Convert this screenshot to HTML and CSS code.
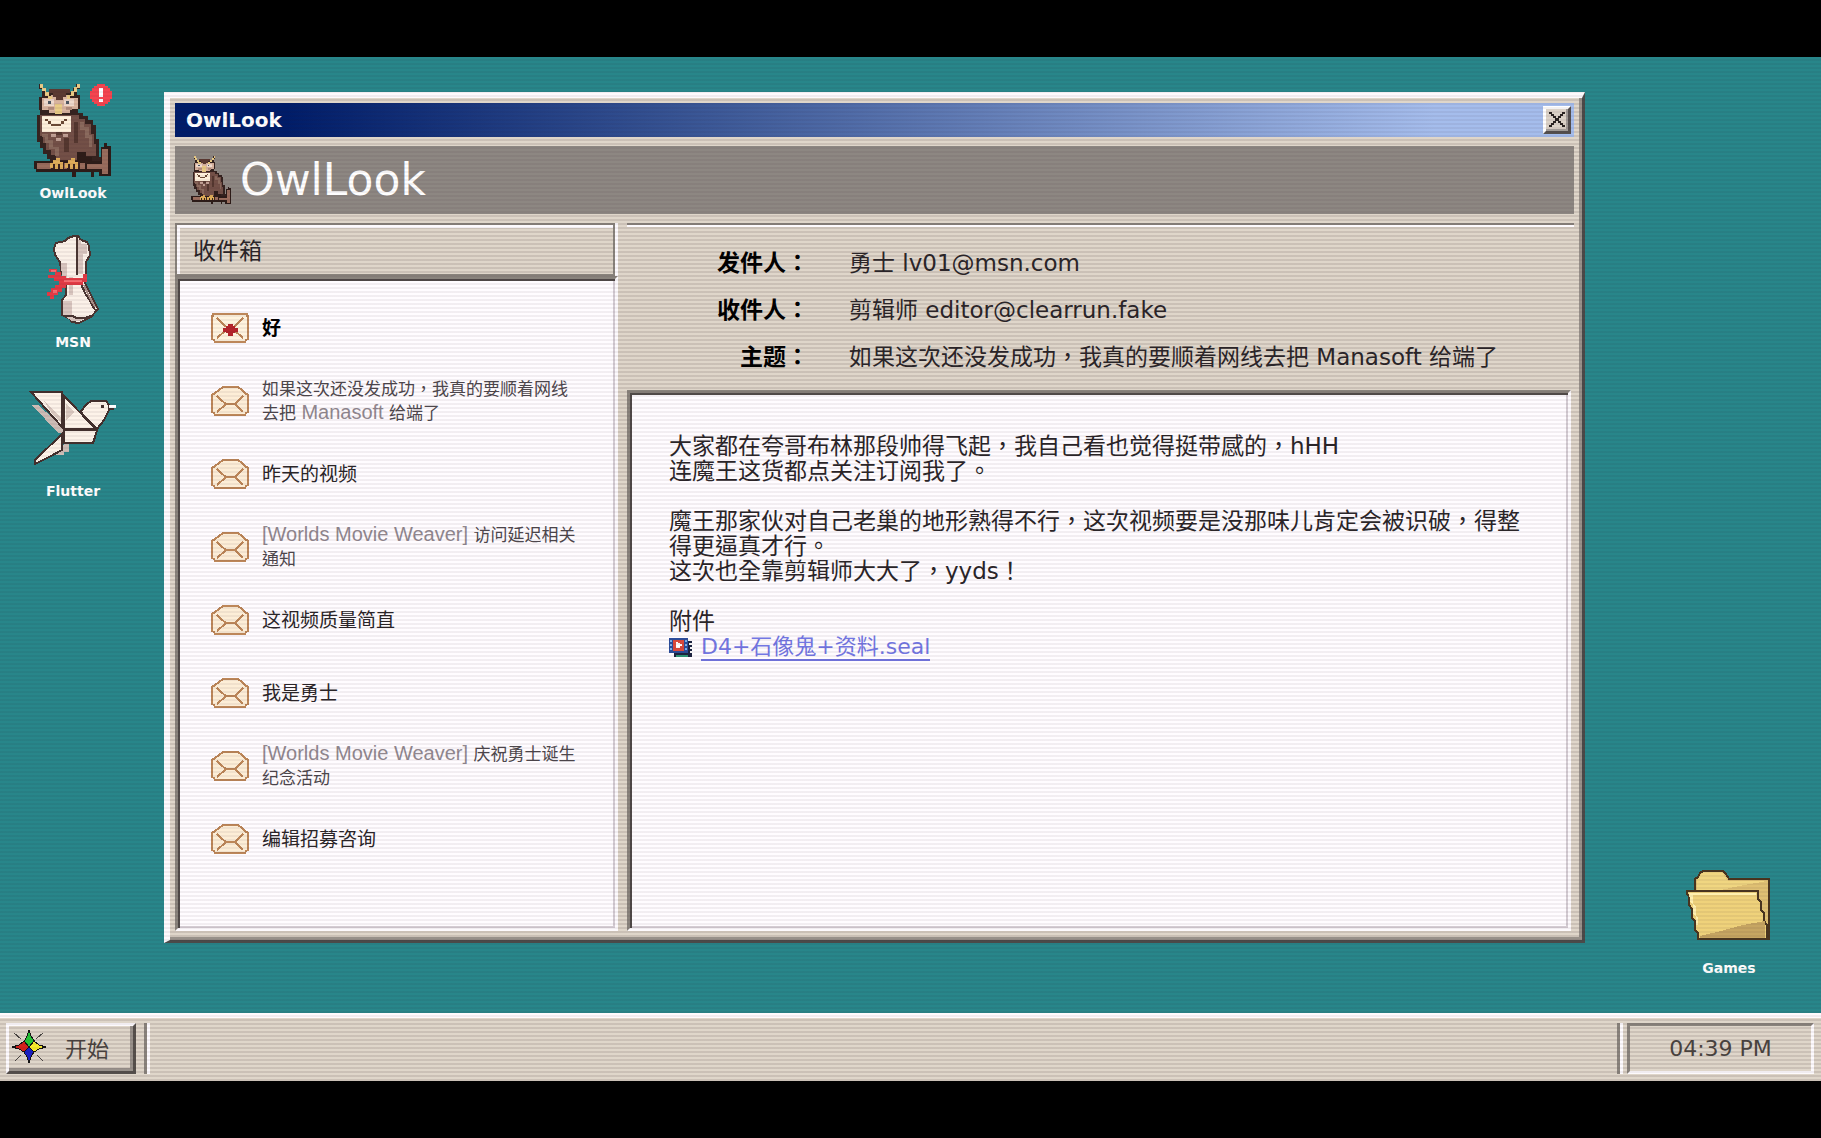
FILE: index.html
```html
<!DOCTYPE html>
<html lang="zh-Hant">
<head>
    <meta charset="UTF-8">
    <meta name="viewport" content="width=device-width, initial-scale=1.0">
    <title>OwlLook</title>
    <link rel="stylesheet" href="styles.css">
</head>
<body>
    <!-- Sprites -->
    <svg class="sprites" aria-hidden="true">
        <symbol id="owl" viewBox="0 0 78 94">
            <path fill="#35231f" d="M5 0h4v4h3v4h27V4h3V0h4v5h-3v6h3v14h-2v4h5v3h5v4h5v5h3v14h3v18h3v10H20v-4h-4v-4h-3v-5H9v-6H6v-6H3V31h3v-5H5V13h3V5H5z"/>
            <path fill="#735047" d="M6 31h39v4h6v5h6v10h3v10h2v12H50v4H22v-5h-5v-5h-5v-7H9v-7H6z"/>
            <path fill="#8a6a5d" d="M8 50h6v6h5v7h6v9h-4v-7h-6v-6h-4v-6H8zM46 38h4v5h5v8h3v12h-3V54h-4v-8h-5z"/>
            <path fill="#54372f" d="M40 38h4v21h-4zM30 54h5v14h-5zM22 48h6v3h-6z"/>
            <path fill="#d9b49f" d="M8 14h9v-3h18v3h9v11h-8v4H15v-3H8z"/>
            <path fill="#b58f7f" d="M14 23h6v3h-6zM32 23h6v3h-6z"/>
            <path fill="#5b3a32" d="M15 5h21v4h-4v4h-3v3h-7v-3h-3V9h-4z"/>
            <path fill="#e9cb86" d="M6 0h3v4h3v4h3v4h3v4h-4v-4h-3V7H8V4H6zM43 0h3v4h-3v4h-3v4h-4v4h-3v-5h4V7h3V3h3zM21 20h7v10h-7z"/>
            <path fill="#efd9cc" d="M10 15h10v7H10zM30 15h10v7H30z"/>
            <path fill="#4c5560" d="M14 17h3v3h-3zM32 17h3v3h-3z"/>
            <path fill="#fff1dc" d="M8 32h29v16H8z"/>
            <path fill="#6b4a36" d="M11 35h3v2h-3zM14 37h3v3h-3zM17 40h10v2H17zM27 37h3v3h-3zM30 35h3v2h-3z"/>
            <path fill="#c2a296" d="M17 50h5v3h-5zM29 50h5v3h-5zM22 54h5v3h-5z"/>
            <path fill="#2d1c18" d="M43 68h9v5h6v5H43zM0 77h67V63h3v-4h3v3h4v30H65v-4h-5v5h-3v-5H42v5h-4v-5H2v-3H0z"/>
            <path fill="#9a6d5d" d="M3 79h48v6H3zM53 80h15V65h6v25h-6v-5H53z"/>
            <path fill="#3b2520" d="M17 78h13v7H17zM33 78h13v7H33z"/>
            <path fill="#dfae59" d="M22 74h4v4h3v7h-3v-5h-2v5h-3v-5h-2v4h-3v-5h3v-3h3zM37 74h4v4h3v7h-3v-5h-2v5h-3v-5h-2v4h-3v-5h3v-3h3z"/>
        </symbol>
        <symbol id="mail-open" viewBox="0 0 38 30">
            <path fill="#fdeed7" stroke="#bd8759" stroke-width="2" d="M12 1h15l4 3 3 3 3 2v17l-2 1-1 2H4l-1-2-2-1V9l3-2 4-3z"/>
            <path fill="none" stroke="#bd8759" stroke-width="2" d="M6 10l4 4 5 4h9l4-4 4-4M6 26l9-8M32 26l-8-8"/>
        </symbol>
        <symbol id="mail-new" viewBox="0 0 38 30">
            <path fill="#fff4df" stroke="#bd8759" stroke-width="2" d="M2 1h34v2h1v23l-2 1-1 2H4l-1-2-2-1V3h1z"/>
            <path fill="none" stroke="#bd8759" stroke-width="2" d="M6 5l9 9M32 5l-9 9M6 25l9-8M32 25l-9-8"/>
            <path fill="#b5242b" d="M17 11h5v2h2v2h3v4h-3v1h-2v3h-5v-3h-2v-1h-3v-4h3v-2h2z"/>
        </symbol>
    </svg>

    <main class="screen">
        <section class="desktop">
            <nav class="icon-column">
                <button class="desktop-icon" type="button">
                    <span class="icon-art">
                        <svg width="78" height="94"><use href="#owl"/></svg>
                        <svg class="alert" width="22" height="22" viewBox="0 0 22 22">
                            <path fill="#f5454f" d="M7 0h8v2h3v2h2v3h2v8h-2v3h-2v2h-3v2H7v-2H4v-2H2v-3H0V7h2V4h2V2h3z"/>
                            <path fill="#fff" d="M9 4h4v9H9zM9 15h4v3H9z"/>
                        </svg>
                    </span>
                    <span class="icon-label">OwlLook</span>
                </button>
                <button class="desktop-icon" type="button">
                    <span class="icon-art">
                        <svg width="54" height="92" viewBox="-1 -1 54 92">
                            <path fill="#fbf1e8" stroke="#4a3531" stroke-width="2" d="M7 13l2-5 9-2 3-3 6-2h4l3 4 6 2 2 4 1 9-4 7v14l-1 7 5 10 8 16-7 8-12 6-7-1-2-3-8-4V65l4-5V50l-5-15-1-8-5-7z"/>
                            <path fill="#d9c6bf" d="M31 5h3v4h6v10h-4v20h-5zM14 28h6v15h-5zM16 66h9v14h-9zM22 42h4v18h-4zM19 82h23l-9 4h-8z"/>
                            <path fill="none" stroke="#4a3531" stroke-width="2" d="M30 2v38M34 49l4 9 5 8 5 9M18 81h8l3 2h8l7-2"/>
                            <path fill="none" stroke="#a98f88" stroke-width="2" d="M37 50l4 9 7 13"/>
                            <path fill="#e23b45" d="M2 34h8v3h4v4h5v2h17v-4h4v8h-4v3H19v3h-4v4h-4v3H7v4H3v-3H0v-4h4v-4h4v-3h4v-4H7v-3H1v-3h7v-3H2z"/>
                            <path fill="#f66d72" d="M4 35h5v2H4zM17 45h18v2H17zM6 55h4v3H6z"/>
                        </svg>
                    </span>
                    <span class="icon-label">MSN</span>
                </button>
                <button class="desktop-icon" type="button">
                    <span class="icon-art">
                        <svg width="88" height="76" viewBox="-1 0 88 76">
                            <path fill="#cdbdb6" d="M2 14h6l25 22v6h-5zM36 52h3v9h-5v3H22l-16 9 26-18z"/>
                            <path fill="#fdf3e9" stroke="#43302d" stroke-width="2" d="M1 1h31v35zM51 20l5-6 5-4h15l3 4v5l-5 10-7 9-15-15zM34 39h33l-2 7-2 6H34zM32 43v16l-11 6-16 8v-4z"/>
                            <path fill="#fdf3e9" stroke="#43302d" stroke-width="2" d="M34 5l32 33H34z"/>
                            <path fill="#dccbc2" d="M12 7l19 20v5l-8-8zM36 12l8 9-8 8z"/>
                            <path fill="#43302d" d="M71 14h3v3h-3zM79 17h5v2h-5z"/>
                            <path fill="#fff" d="M79 14h7v3h-7z"/>
                        </svg>
                    </span>
                    <span class="icon-label">Flutter</span>
                </button>
            </nav>

            <button class="desktop-icon games" type="button">
                <span class="icon-art">
                    <svg width="86" height="72" viewBox="0 0 86 72">
                        <path fill="#dfc073" stroke="#49351f" stroke-width="2" d="M9 21V9l3-2 2-4 3-2h20l3 3 3 5h40v60H13z"/>
                        <path fill="#f0d681" d="M11 10l6-8h19l6 9h39l-28 5-18 4H11z"/>
                        <path fill="#efd27b" stroke="#49351f" stroke-width="2" d="M1 21h71v8l3 3v8l3 3v8l3 4v14H12v-6l-3-3v-9l-3-3v-9l-3-4v-9l-2-2z"/>
                        <path fill="#c6a562" d="M14 68v-2l21-5 22-6 22-4v17z"/>
                        <path fill="#fff0af" d="M3 23h67v2H7v9l3 3v8l2 3v7h-2v-8l-3-3v-9l-3-4z"/>
                    </svg>
                </span>
                <span class="icon-label">Games</span>
            </button>

            <!-- Mail window -->
            <section class="window">
                <header class="title-bar">
                    <h1>OwlLook</h1>
                    <button class="close" type="button" aria-label="关闭">
                        <svg width="16" height="16" viewBox="0 0 16 16">
                            <path fill="#292321" d="M0 0h3v2h2v2h2v2h2V4h2V2h2V0h3v2h-2v2h-2v2h-2v3h2v2h2v2h2v2h-3v-2h-2v-2H9V9H7v2H5v2H3v2H0v-2h2v-2h2V9h2V6H4V4H2V2H0z"/>
                        </svg>
                    </button>
                </header>

                <div class="banner">
                    <svg width="41" height="49"><use href="#owl"/></svg>
                    <span>OwlLook</span>
                </div>

                <div class="panes">
                    <aside class="inbox">
                        <h2>收件箱</h2>
                        <ul class="mail-list">
                            <li><button class="mail unread" type="button"><svg width="38" height="30"><use href="#mail-new"/></svg><span>好</span></button></li>
                            <li><button class="mail long" type="button"><svg width="38" height="30"><use href="#mail-open"/></svg><span>如果这次还没发成功，我真的要顺着网线去把 <em>Manasoft</em> 给端了</span></button></li>
                            <li><button class="mail" type="button"><svg width="38" height="30"><use href="#mail-open"/></svg><span>昨天的视频</span></button></li>
                            <li><button class="mail long" type="button"><svg width="38" height="30"><use href="#mail-open"/></svg><span><em>[Worlds Movie Weaver]</em> 访问延迟相关通知</span></button></li>
                            <li><button class="mail" type="button"><svg width="38" height="30"><use href="#mail-open"/></svg><span>这视频质量简直</span></button></li>
                            <li><button class="mail" type="button"><svg width="38" height="30"><use href="#mail-open"/></svg><span>我是勇士</span></button></li>
                            <li><button class="mail long" type="button"><svg width="38" height="30"><use href="#mail-open"/></svg><span><em>[Worlds Movie Weaver]</em> 庆祝勇士诞生纪念活动</span></button></li>
                            <li><button class="mail" type="button"><svg width="38" height="30"><use href="#mail-open"/></svg><span>编辑招募咨询</span></button></li>
                        </ul>
                    </aside>

                    <article class="reader">
                        <dl class="mail-head">
                            <dt>发件人：</dt>
                            <dd>勇士 lv01@msn.com</dd>
                            <dt>收件人：</dt>
                            <dd>剪辑师 editor@clearrun.fake</dd>
                            <dt>主题：</dt>
                            <dd>如果这次还没发成功，我真的要顺着网线去把 Manasoft 给端了</dd>
                        </dl>
                        <div class="mail-body">
                            <p>大家都在夸哥布林那段帅得飞起，我自己看也觉得挺带感的，hHH<br>连魔王这货都点关注订阅我了。</p>
                            <p>魔王那家伙对自己老巢的地形熟得不行，这次视频要是没那味儿肯定会被识破，得整得更逼真才行。<br>这次也全靠剪辑师大大了，yyds！</p>
                            <div class="attachment">
                                附件
                                <a href="#">
                                    <svg width="24" height="20" viewBox="0 0 24 20">
                                        <path fill="#1c2340" d="M5 3h18v16H5z"/>
                                        <path fill="#2f9a7a" d="M7 17h12v2H7z"/>
                                        <path fill="#fff" d="M20 5h3v2h-3zM21 9h3v2h-3zM21 13h3v2h-3z"/>
                                        <path fill="#2c4d9b" d="M0 0h19v15H0z"/>
                                        <path fill="#7fb4e8" d="M1 2h2v2H1zM1 6h2v2H1zM1 10h2v2H1zM16 2h2v2h-2zM16 6h2v2h-2zM16 10h2v2h-2z"/>
                                        <path fill="#dc4a3c" d="M4 2h11v11H4z"/>
                                        <path fill="#fff" d="M7 4h2v1h2v1h2v2h-2v2H7z"/>
                                    </svg>
                                    <span>D4+石像鬼+资料.seal</span>
                                </a>
                            </div>
                        </div>
                    </article>
                </div>
            </section>
        </section>

        <footer class="taskbar">
            <button class="start" type="button">
                <svg width="34" height="34" viewBox="0 0 34 34">
                    <path stroke="#4a4643" stroke-width="1" d="M2 3l7 6M31 3l-7 6M3 31l6-6M31 31l-6-6"/>
                    <path fill="#24c336" stroke="#141414" d="M17 0l2 6 4 6-6 5-5-5 3-6z"/>
                    <path fill="#d4221c" stroke="#141414" d="M0 17l7-2 5-4 5 6-5 5-5-3z"/>
                    <path fill="#f7ec2b" stroke="#141414" d="M34 17l-7-2-5-4-5 6 5 5 5-3z"/>
                    <path fill="#1a1fc4" stroke="#141414" d="M17 33l-2-6-3-5 5-5 5 5-3 5z"/>
                </svg>
                <span>开始</span>
            </button>
            <span class="divider"></span>
            <span class="divider tray"></span>
            <time class="clock">04:39 PM</time>
        </footer>
    </main>
</body>
</html>
```
FILE: styles.css
```css
/* Base */
* {
    box-sizing: border-box;
}

body {
    margin: 0;
    background: #000;
    color: #2a2528;
    font-family: "DejaVu Sans", "Noto Sans CJK TC", "Noto Sans CJK SC", sans-serif;
    font-size: 23px;
}

h1, h2, p, ul, dl, dd {
    margin: 0;
    padding: 0;
}

button {
    padding: 0;
    border: none;
    background: none;
    color: inherit;
    font: inherit;
    cursor: pointer;
}

svg {
    flex: none;
    display: block;
    shape-rendering: crispEdges;
}

.sprites {
    position: absolute;
    width: 0;
    height: 0;
}

/* Letterboxed screen */
.screen {
    position: relative;
    display: flex;
    flex-direction: column;
    min-height: 100vh;
    border: solid #000;
    border-width: 57px 0;
}

/* CRT scanlines */
.screen::after {
    content: "";
    position: absolute;
    inset: 0;
    background: repeating-linear-gradient(rgba(40, 0, 30, 0) 0 2px, rgba(40, 10, 30, 0.06) 2px 4px);
    pointer-events: none;
}

.desktop {
    position: relative;
    flex: 1;
    background: #28868a;
}

/* Desktop icons */
.icon-column {
    display: flex;
    flex-direction: column;
    gap: 30px;
    width: 146px;
    padding-top: 27px;
}

.desktop-icon {
    display: flex;
    flex-direction: column;
    align-items: center;
    gap: 5px;
    width: 146px;
    color: #fff;
}

.icon-art {
    position: relative;
    display: flex;
    align-items: center;
    height: 94px;
}

.icon-label {
    font-size: 14px;
    font-weight: bold;
    line-height: 20px;
}

.alert {
    position: absolute;
    top: 0;
    right: 0;
}

.games {
    position: absolute;
    right: 19px;
    bottom: 35px;
}

/* Window */
.window {
    position: absolute;
    top: 35px;
    right: 236px;
    bottom: 70px;
    left: 164px;
    display: flex;
    flex-direction: column;
    gap: 9px;
    padding: 5px 8px 9px 5px;
    border: solid;
    border-width: 6px 3px 3px 6px;
    border-color: #fdfafd #4b4a49 #4b4a49 #fdfafd;
    background: repeating-linear-gradient(#dfd6ca 0 1px, #d5ccc0 1px 3px, #dfd6ca 3px 4px);
    box-shadow: inset -3px -3px #98918a;
}

.title-bar {
    display: flex;
    align-items: center;
    justify-content: space-between;
    height: 34px;
    padding: 0 3px 0 11px;
    background: linear-gradient(90deg, #001d69 8%, #3b5897 38%, #a5bdec 90%);
    color: #fff;
}

.title-bar h1 {
    font-size: 20px;
    line-height: 24px;
}

.close {
    display: flex;
    align-items: center;
    justify-content: center;
    width: 28px;
    height: 28px;
    border: 3px solid;
    border-color: #fff #55504f #55504f #fff;
    background: #dcd3c8;
    box-shadow: inset -2px -2px #a09a96;
}

.banner {
    display: flex;
    align-items: center;
    gap: 8px;
    height: 68px;
    padding-left: 16px;
    background: #8d8782;
    color: #fff;
    font-size: 44px;
    line-height: 48px;
}

.panes {
    flex: 1;
    display: grid;
    grid-template-columns: 443px 1fr;
    gap: 9px;
}

/* Inbox */
.inbox {
    display: flex;
    flex-direction: column;
}

.inbox h2 {
    height: 53px;
    margin-right: 3px;
    padding: 0 16px;
    border: 2px solid #89837c;
    box-shadow: inset 3px 3px #fdfafd, 3px 0 #fdfafd;
    font-size: 23px;
    font-weight: normal;
    line-height: 52px;
}

.mail-list,
.mail-body {
    flex: 1;
    border: 3px solid;
    border-color: #89837c #fdfafd #fdfafd #89837c;
    background: #fffcff;
    box-shadow: inset 2px 2px #4f4947, inset -2px -2px #d4ccd3;
}

.mail-list {
    padding: 12px 32px 12px 33px;
    list-style: none;
}

.mail {
    display: flex;
    align-items: center;
    gap: 13px;
    width: 100%;
    height: 73px;
    font-size: 19px;
    line-height: 24px;
    text-align: left;
}

.mail.long {
    color: #4d474c;
    font-size: 17px;
}

.mail em {
    color: #91888f;
    font-family: "Liberation Sans", sans-serif;
    font-size: 20px;
    font-style: normal;
    line-height: 20px;
}

.mail.unread {
    color: #000;
    font-weight: bold;
}

/* Reader */
.reader {
    display: flex;
    flex-direction: column;
    border-top: 2px solid #89837c;
    box-shadow: inset 0 2px #fdfafd;
}

.mail-head {
    display: grid;
    grid-template-columns: 182px 1fr;
    grid-auto-rows: 47px;
    column-gap: 40px;
    height: 165px;
    padding-top: 15px;
    line-height: 47px;
}

.mail-head dt {
    color: #000;
    font-weight: bold;
    text-align: right;
}

.mail-body {
    margin-right: 3px;
    padding: 41px 39px;
    line-height: 25px;
}

.mail-body p {
    margin-bottom: 25px;
}

.attachment a {
    display: flex;
    align-items: center;
    gap: 8px;
    width: max-content;
    color: #7377e3;
    font-size: 22px;
    text-decoration: none;
}

.attachment a span {
    border-bottom: 2px solid #7377e3;
}

/* Taskbar */
.taskbar {
    display: flex;
    align-items: stretch;
    height: 68px;
    padding: 5px 7px 7px 6px;
    border-top: 5px solid #fdfafd;
    background: repeating-linear-gradient(#dfd6ca 0 1px, #d5ccc0 1px 3px, #dfd6ca 3px 4px);
    color: #49433f;
    font-size: 22px;
}

.start {
    display: flex;
    align-items: center;
    gap: 19px;
    width: 130px;
    padding: 0 3px 3px;
    border: 3px solid;
    border-color: #fdfafd #55504c #55504c #fdfafd;
    box-shadow: inset -3px -3px #98918b;
}

.divider {
    width: 6px;
    margin-left: 8px;
    border-left: 3px solid #89837c;
    border-right: 3px solid #fdfafd;
}

.tray {
    margin-left: auto;
}

.clock {
    display: flex;
    align-items: center;
    justify-content: center;
    width: 187px;
    margin-left: 4px;
    border: 3px solid;
    border-color: #89837c #fdfafd #fdfafd #89837c;
}
```
